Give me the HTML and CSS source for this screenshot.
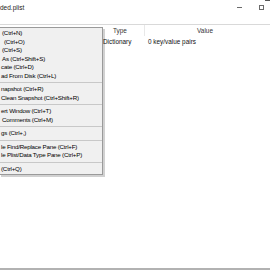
FILE: index.html
```html
<!DOCTYPE html>
<html>
<head>
<meta charset="utf-8">
<link rel="stylesheet" href="styles.css">
</head>
<body>
<div class="window">
  <div class="titlebar">
    <span class="title">ded.plist</span>
    <div class="controls">
      <span class="ctl-min"></span>
      <span class="ctl-max"></span>
    </div>
  </div>
  <div class="tree">
    <div class="header">
      <div class="col col-key"></div>
      <div class="col col-type">Type</div>
      <div class="col col-value">Value</div>
    </div>
    <div class="row">
      <div class="col col-key"></div>
      <div class="col col-type">Dictionary</div>
      <div class="col col-value">0 key/value pairs</div>
    </div>
  </div>
  <div class="statusbar"></div>

  <div class="menu">
    <div class="item">(Ctrl+N)</div>
    <div class="item indent">(Ctrl+O)</div>
    <div class="item">(Ctrl+S)</div>
    <div class="item">As (Ctrl+Shift+S)</div>
    <div class="item flush">cate (Ctrl+D)</div>
    <div class="item flush">ad From Disk (Ctrl+L)</div>
    <div class="sep"></div>
    <div class="item flush">napshot (Ctrl+R)</div>
    <div class="item flush">Clean Snapshot (Ctrl+Shift+R)</div>
    <div class="sep"></div>
    <div class="item flush">ert Window (Ctrl+T)</div>
    <div class="item">Comments (Ctrl+M)</div>
    <div class="sep"></div>
    <div class="item flush">gs (Ctrl+,)</div>
    <div class="sep"></div>
    <div class="item flush">le Find/Replace Pane (Ctrl+F)</div>
    <div class="item flush">le Plist/Data Type Pane (Ctrl+P)</div>
    <div class="sep"></div>
    <div class="item flush">(Ctrl+Q)</div>
  </div>
</div>
</body>
</html>
```

FILE: styles.css
```css
html, body {
  margin: 0;
  padding: 0;
  background: #ffffff;
}

.window {
  position: relative;
  width: 270px;
  height: 270px;
  overflow: hidden;
  display: flex;
  flex-direction: column;
  font-family: "Liberation Sans", Arial, sans-serif;
  color: #000;
  background: #fff;
}

.titlebar {
  position: relative;
  height: 25px;
  flex: none;
  display: flex;
  align-items: flex-start;
  justify-content: space-between;
  border-bottom: 1px solid #d9d9d9;
  box-sizing: border-box;
}

.titlebar::after {
  content: "";
  position: absolute;
  top: 0;
  right: 0;
  width: 5px;
  height: 1px;
  background: #555;
}

.title {
  font-size: 6.5px;
  line-height: 8px;
  margin-top: 4px;
  color: #1a1a1a;
}

.controls {
  display: flex;
  align-items: center;
  gap: 17px;
  margin-top: 5px;
  margin-right: 6px;
}

.ctl-min {
  width: 5px;
  height: 1px;
  background: #6a6a6a;
}

.ctl-max {
  width: 5px;
  height: 5px;
  box-sizing: border-box;
  border: 1px solid #6a6a6a;
}

.tree {
  flex: 1;
  font-size: 6.4px;
  line-height: 11px;
}

.header, .row {
  display: flex;
}

.header {
  height: 11px;
  color: #333;
}

.row {
  height: 11px;
  color: #111;
}

.col {
  box-sizing: border-box;
  white-space: nowrap;
  overflow: hidden;
}

.col-key {
  width: 96px;
}

.col-type {
  width: 49px;
}

.col-value {
  width: 120px;
}

.header .col {
  text-align: center;
  border-right: 1px solid #e8e8e8;
}

.header .col-key,
.header .col-value {
  border-right: 0;
}

.row .col-type {
  padding-left: 7px;
}

.row .col-value {
  padding-left: 3px;
}

.statusbar {
  height: 2px;
  flex: none;
  background: #b2b2b2;
}

.menu {
  position: absolute;
  top: 27px;
  left: -1px;
  width: 104px;
  box-sizing: border-box;
  padding: 1px 0;
  background: #f0f0f0;
  border: 1px solid #9a9a9a;
  box-shadow: 2px 2px 0 rgba(0, 0, 0, 0.18);
  font-size: 6.2px;
  letter-spacing: -0.2px;
  line-height: 8.5px;
  color: #000;
}

.item {
  height: 8.5px;
  padding-left: 2px;
  white-space: nowrap;
}

.item.indent {
  padding-left: 4px;
}

.item.flush {
  padding-left: 1px;
}

.sep {
  height: 1px;
  margin: 2px 0;
  background: #c8c8c8;
}
```
